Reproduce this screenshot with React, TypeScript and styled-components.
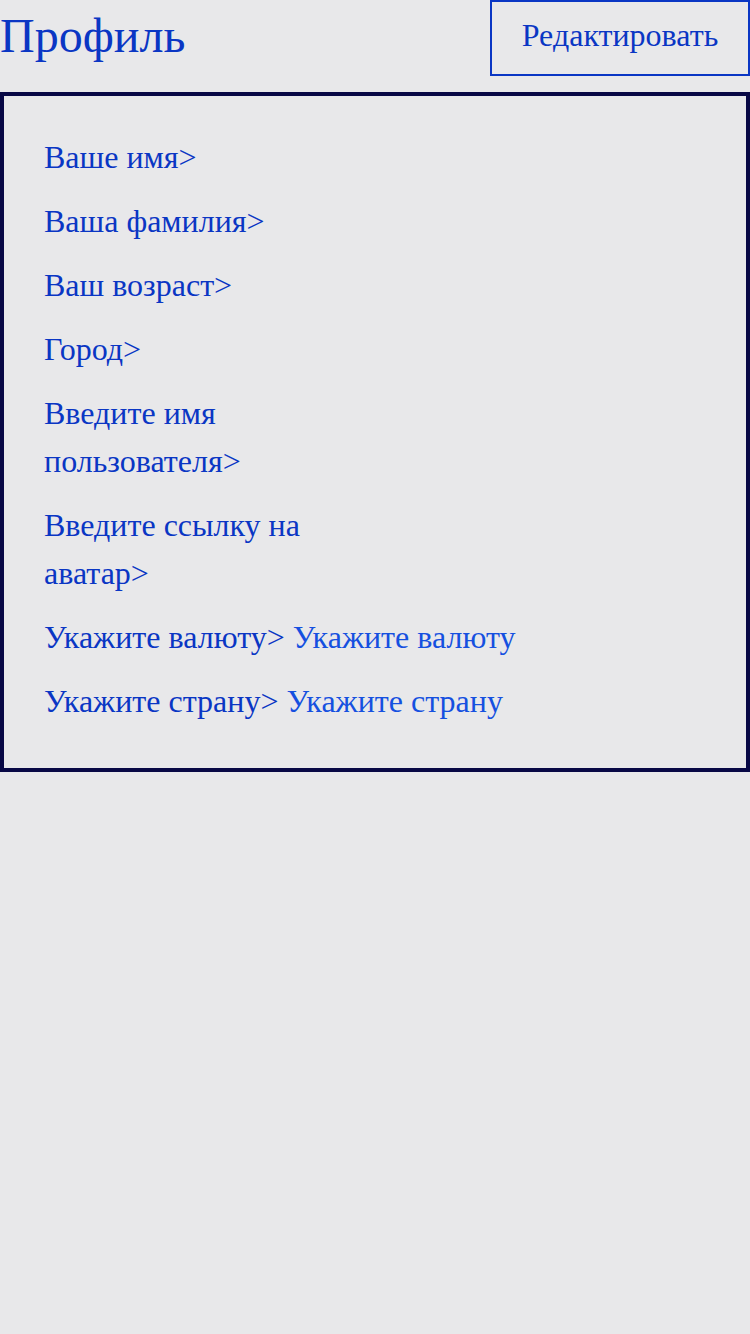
import React from "react";
import styled, { createGlobalStyle } from "styled-components";

const Global = createGlobalStyle`
  html, body { margin: 0; padding: 0; background: #e8e8ea; }
  body { font-family: "Liberation Serif", "Times New Roman", serif; }
  #root { min-height: 1334px; background: #e8e8ea; }
`;

const Page = styled.div`
  width: 750px;
  display: flex;
  flex-direction: column;
  gap: 16px;
`;

const Header = styled.header`
  display: flex;
  justify-content: space-between;
  align-items: flex-start;
  height: 76px;
`;

const Title = styled.h1`
  margin: 0;
  padding-top: 8px;
  font-size: 48px;
  font-weight: 400;
  line-height: 56px;
  color: #0a36c4;
`;

const EditButton = styled.button`
  width: 260px;
  height: 76px;
  box-sizing: border-box;
  border: 2px solid #0a36c4;
  background: transparent;
  color: #0a36c4;
  font-family: "Liberation Serif", "Times New Roman", serif;
  font-size: 32px;
  padding: 0 0 6px;
`;

const Panel = styled.section`
  border: 4px solid #080845;
  padding: 37px 40px 43px;
  display: flex;
  flex-direction: column;
  gap: 16px;
`;

const Row = styled.div`
  font-size: 32px;
  line-height: 48px;
  display: flex;
  align-items: flex-start;
  gap: 8px;
`;

const Label = styled.span`
  color: #0a36c4;
  max-width: 330px;
`;

const Value = styled.span`
  color: #1550e0;
`;

const rows: { label: string; value?: string }[] = [
  { label: "Ваше имя>" },
  { label: "Ваша фамилия>" },
  { label: "Ваш возраст>" },
  { label: "Город>" },
  { label: "Введите имя пользователя>" },
  { label: "Введите ссылку на аватар>" },
  { label: "Укажите валюту>", value: "Укажите валюту" },
  { label: "Укажите страну>", value: "Укажите страну" },
];

export default function App() {
  return (
    <>
      <Global />
      <Page>
        <Header>
          <Title>Профиль</Title>
          <EditButton>Редактировать</EditButton>
        </Header>
        <Panel>
          {rows.map((r) => (
            <Row key={r.label}>
              <Label>{r.label}</Label>
              {r.value && <Value>{r.value}</Value>}
            </Row>
          ))}
        </Panel>
      </Page>
    </>
  );
}
